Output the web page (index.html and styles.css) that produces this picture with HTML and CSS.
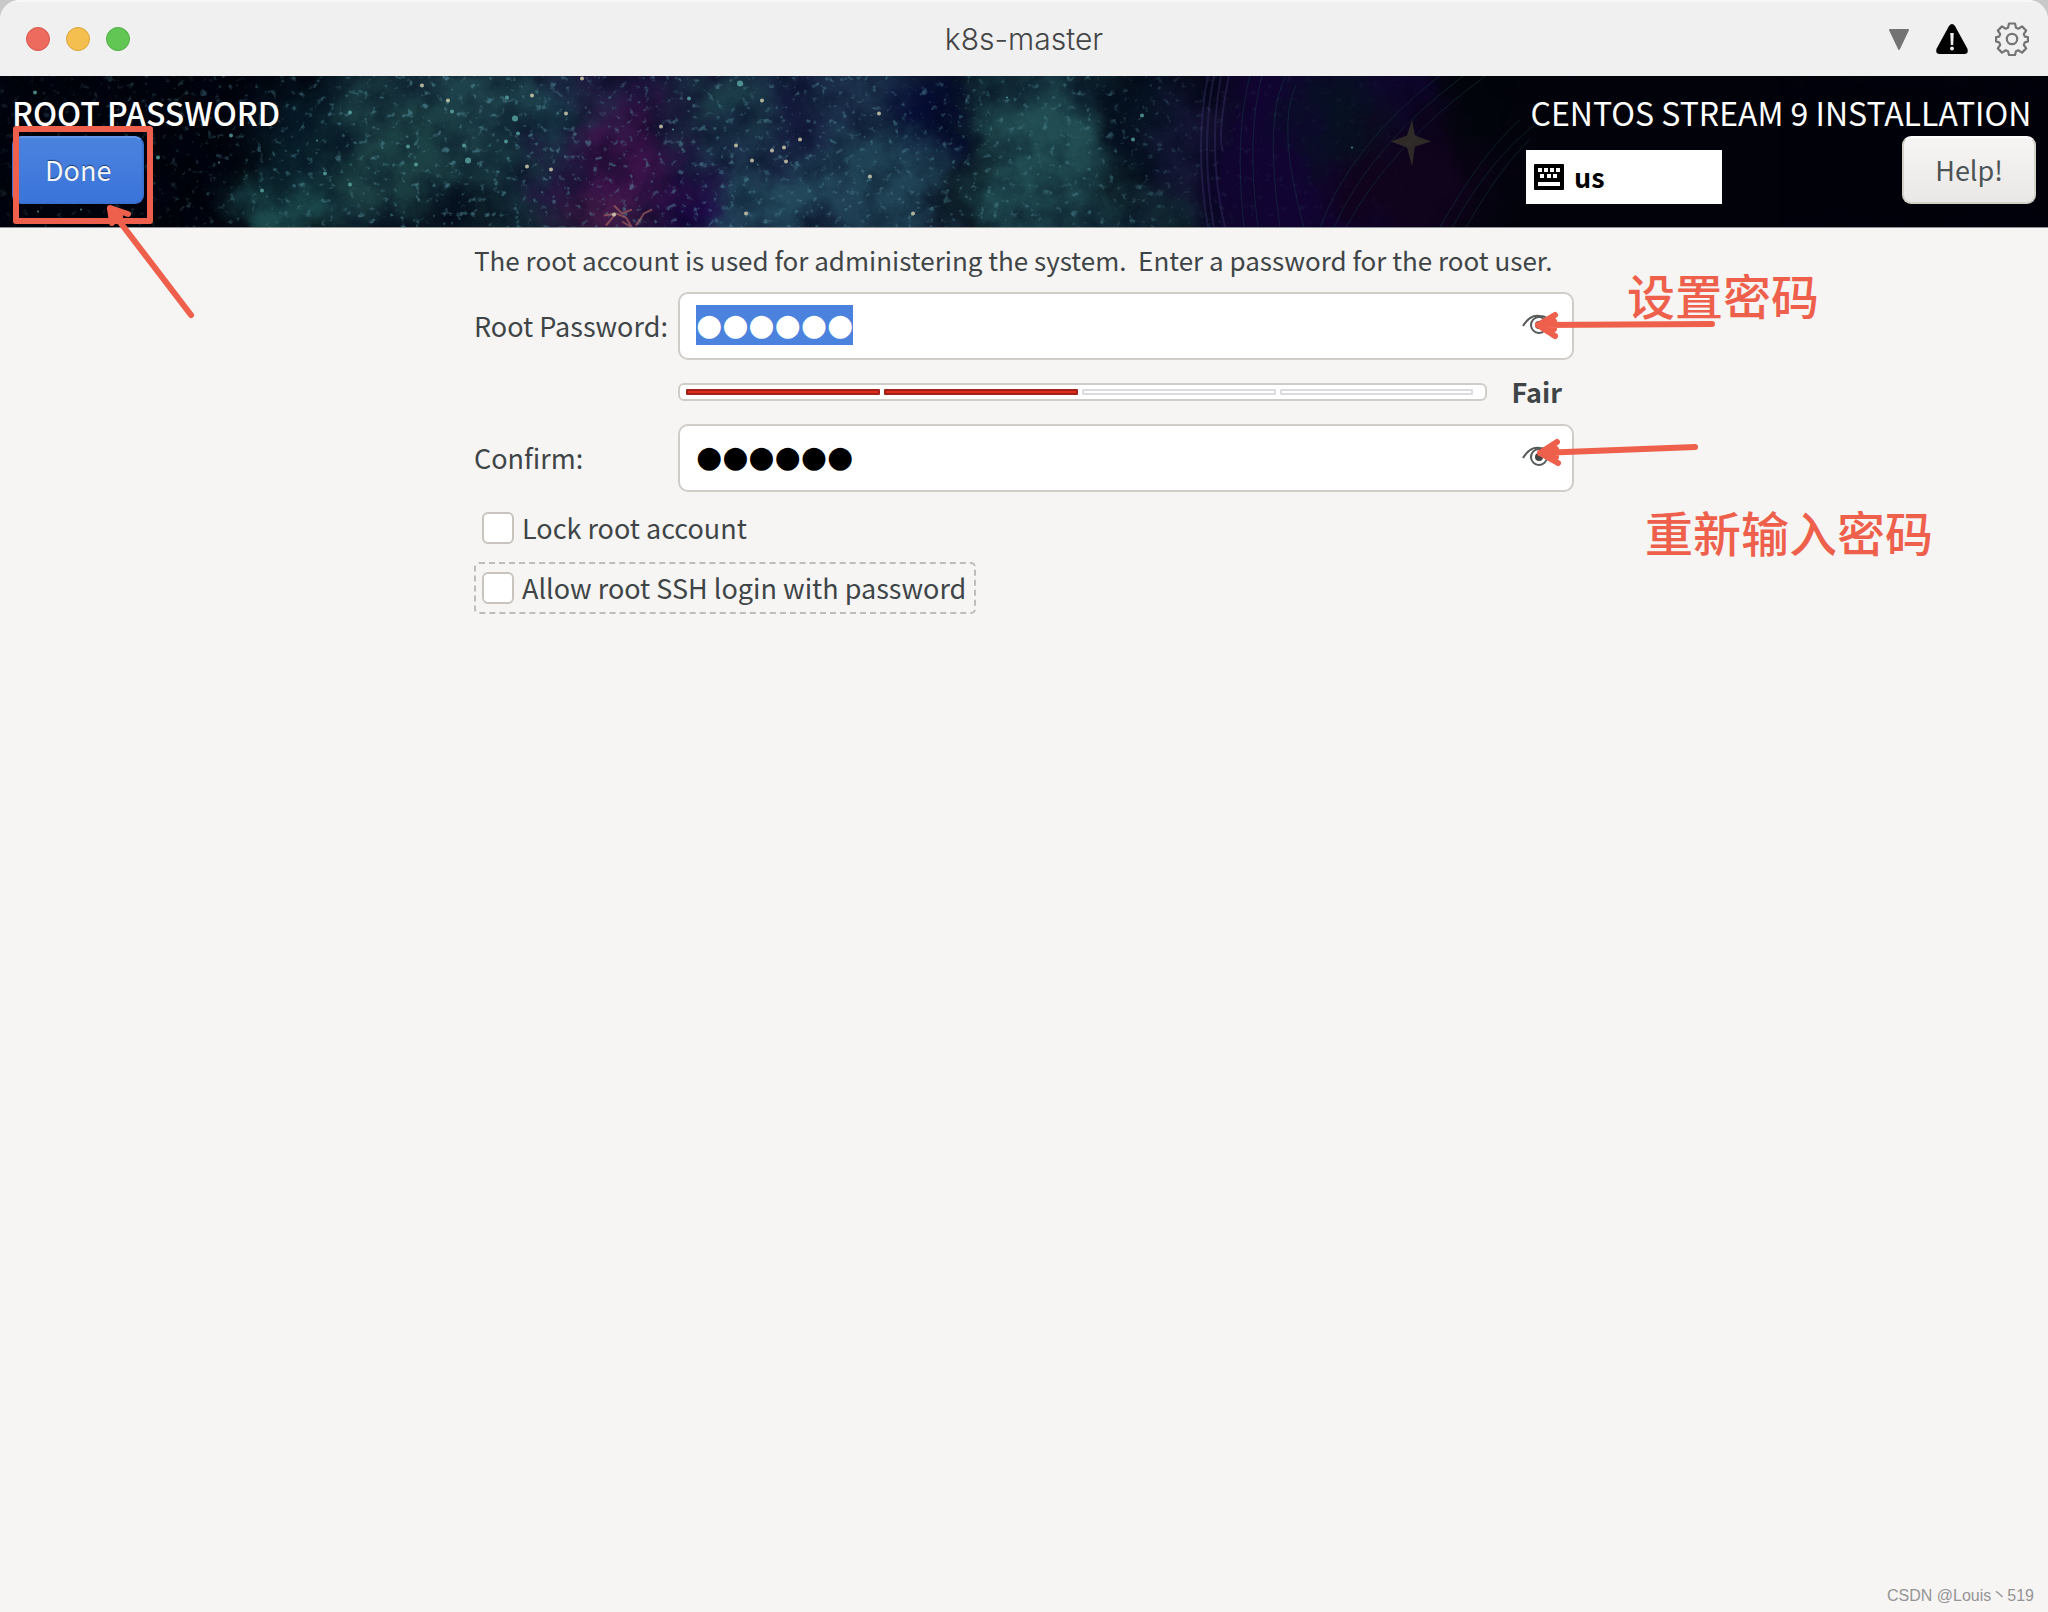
FILE: index.html
```html
<!DOCTYPE html>
<html lang="en">
<head>
    <meta charset="UTF-8" />
    <meta name="viewport" content="width=device-width, initial-scale=1" />
    <title>k8s-master</title>
    <link rel="stylesheet" href="styles.css">
</head>
<body>

<div class="window">
    <div class="titlebar">
        <div class="lights">
            <span class="light red"></span>
            <span class="light yellow"></span>
            <span class="light green"></span>
        </div>
        <div class="window-title">k8s-master</div>
        <div class="tools">
            <svg width="20" height="21" viewBox="0 0 20 21"><path d="M1 0h18q1.500 0 .8 1.400L11 20q-1 2-2 0L.2 1.400Q-.5 0 1 0z" fill="#737373"/></svg>
            <svg width="32" height="30" viewBox="0 0 32 30">
                <path d="M13 2q3-4 6 0l12.300 22.500q1.800 5-3 5.500H3.700q-4.800-.5-3-5.500z" fill="#000"/>
                <path d="M14.300 9h3.400l-.5 12h-2.400z" fill="#f0f0f0"/>
                <circle cx="16" cy="24.500" r="1.900" fill="#f0f0f0"/>
            </svg>
            <svg width="34" height="34" viewBox="0 0 34 34" fill="none" stroke="#757575" stroke-width="2.200" stroke-linejoin="round">
                <path d="M14 1.500h6l1 4.200 2.300 1 3.700-2.300 4.200 4.200-2.400 3.600 1 2.400 3.100.4v4.500l-3.100.9-1 2.400 2.400 3.600-4.200 4.200-3.700-2.300-2.300 1-1 3.700h-6l-1-3.700-2.300-1-3.700 2.300-4.200-4.200 2.400-3.600-1-2.400-3.100-.9V15l3.100-.4 1-2.400-2.400-3.600L7 4.400l3.700 2.300 2.300-1z"/>
                <circle cx="17" cy="17" r="5.200"/>
            </svg>
        </div>
    </div>

    <header class="banner">
        <svg class="nebula" viewBox="0 0 2048 152" preserveAspectRatio="xMidYMid slice" aria-hidden="true">
            <defs>
                <filter id="cloud" x="0" y="0" width="100%" height="100%" color-interpolation-filters="sRGB">
                    <feGaussianBlur stdDeviation="17" result="soft"/>
                    <feTurbulence type="fractalNoise" baseFrequency=".02" numOctaves="6" seed="7" result="n"/>
                    <feDisplacementMap in="soft" in2="n" scale="70" xChannelSelector="R" yChannelSelector="G"/>
                </filter>
                <filter id="shade" x="0" y="0" width="100%" height="100%" color-interpolation-filters="sRGB">
                    <feTurbulence type="fractalNoise" baseFrequency=".03" numOctaves="6" seed="21"/>
                    <feColorMatrix values="0 0 0 0 0  0 0 0 0 .02  0 0 0 0 .1  1.800 0 0 0 -.650"/>
                </filter>
                <filter id="dust" x="0" y="0" width="100%" height="100%" color-interpolation-filters="sRGB">
                    <feTurbulence type="fractalNoise" baseFrequency=".14" numOctaves="3" seed="4"/>
                    <feColorMatrix values="0 0 0 0 .36  0 0 0 0 .6  0 0 0 0 .66  0 5 0 0 -3.100"/>
                </filter>
                <linearGradient id="dustFade">
                    <stop offset="0" stop-color="#fff" stop-opacity=".15"/>
                    <stop offset=".2" stop-color="#fff" stop-opacity=".55"/>
                    <stop offset=".54" stop-color="#fff" stop-opacity=".4"/>
                    <stop offset=".6" stop-color="#fff" stop-opacity=".1"/>
                    <stop offset=".72" stop-color="#fff" stop-opacity="0"/>
                </linearGradient>
                <mask id="dustMask"><rect width="2048" height="152" fill="url(#dustFade)"/></mask>
            </defs>
            <rect width="2048" height="152" fill="#02040c"/>
            <g filter="url(#cloud)" opacity=".84">
                <rect width="2048" height="152" fill="#01040b"/>
                <ellipse cx="290" cy="130" rx="50" ry="36" fill="#246060"/>
                <ellipse cx="300" cy="60" rx="45" ry="50" fill="#0a2530"/>
                <rect x="340" y="-20" width="250" height="190" fill="#1b3e48"/>
                <ellipse cx="400" cy="80" rx="60" ry="60" fill="#224e50"/>
                <ellipse cx="480" cy="20" rx="60" ry="30" fill="#25505a"/>
                <ellipse cx="440" cy="148" rx="70" ry="20" fill="#050f1c"/>
                <rect x="545" y="-20" width="180" height="200" fill="#221a48"/>
                <ellipse cx="565" cy="40" rx="36" ry="34" fill="#20495a"/>
                <ellipse cx="624" cy="85" rx="44" ry="62" fill="#461555"/>
                <ellipse cx="600" cy="145" rx="50" ry="18" fill="#5b2456"/>
                <ellipse cx="690" cy="138" rx="32" ry="26" fill="#26055a"/>
                <rect x="715" y="-20" width="235" height="200" fill="#223c5a"/>
                <ellipse cx="775" cy="125" rx="60" ry="34" fill="#2a566c"/>
                <ellipse cx="720" cy="30" rx="44" ry="30" fill="#204a54"/>
                <ellipse cx="800" cy="40" rx="34" ry="46" fill="#1a2048"/>
                <ellipse cx="890" cy="110" rx="55" ry="60" fill="#265064"/>
                <ellipse cx="930" cy="34" rx="36" ry="34" fill="#060d3c"/>
                <rect x="975" y="-20" width="130" height="200" fill="#1d454f"/>
                <ellipse cx="1040" cy="90" rx="70" ry="65" fill="#295e62"/>
                <rect x="1115" y="-20" width="70" height="130" fill="#081626"/>
                <ellipse cx="1130" cy="150" rx="80" ry="20" fill="#1c424c"/>
                <ellipse cx="1185" cy="75" rx="20" ry="70" fill="#20204a"/>
                <rect x="1215" y="-20" width="210" height="200" fill="#14053a"/>
                <ellipse cx="1345" cy="40" rx="50" ry="46" fill="#081426"/>
                <ellipse cx="1410" cy="110" rx="80" ry="60" fill="#130320"/>
                <rect x="1510" y="-20" width="600" height="200" fill="#02020b"/>
            </g>
            <rect width="1220" height="152" filter="url(#shade)" opacity=".5"/>
            <g mask="url(#dustMask)"><rect width="2048" height="152" filter="url(#dust)"/></g>
            <g fill="none" stroke="#443a72" stroke-width="2" opacity=".35">
                <path d="M1208 0q-14 70 0 152M1214 0q-14 70 0 152M1221 0q-14 76 4 152M1229 0q-12 60-6 76"/>
            </g>
            <g fill="none" stroke="#174044" stroke-width="1" opacity=".45">
                <path d="M1250 0q-16 60-6 152M1262 0q-16 60-4 152M1286 0q-22 40-6 152M1296 10q-20 40 8 142"/>
                <path d="M1320 152Q1350 70 1440 0M1334 152Q1370 70 1464 0M1346 152Q1390 70 1486 0M1440 152Q1480 80 1520 44M1452 152Q1490 84 1534 50M1466 152Q1500 92 1530 64"/>
            </g>
            <path d="M1412 44l3 16 16 6-16 5-3 20-5-19-16-6 16-6z" fill="#45452f" opacity=".6"/>
            <g fill="none" stroke="#b06a68" stroke-width="2" opacity=".6">
                <path d="M606 150l10-12 10 4 6 10M614 130l8 8 10-4M636 150l8-12 8-4M622 146l10 6M604 140l12-2"/>
            </g>
            <g fill="#d9d3b2" opacity=".8">
                <circle cx="422" cy="10" r="2"/><circle cx="448" cy="25" r="2"/><circle cx="532" cy="20" r="2"/>
                <circle cx="582" cy="3" r="2"/><circle cx="566" cy="38" r="2"/><circle cx="527" cy="91" r="2"/>
                <circle cx="551" cy="94" r="2"/><circle cx="661" cy="51" r="2"/><circle cx="762" cy="25" r="2"/>
                <circle cx="736" cy="70" r="2"/><circle cx="784" cy="72" r="2"/><circle cx="772" cy="75" r="2"/>
                <circle cx="752" cy="85" r="2"/><circle cx="786" cy="86" r="2"/><circle cx="879" cy="38" r="2"/>
                <circle cx="870" cy="101" r="2"/><circle cx="913" cy="138" r="2"/><circle cx="746" cy="138" r="2"/>
                <circle cx="614" cy="139" r="2"/><circle cx="800" cy="64" r="2"/>
            </g>
            <g fill="#66b8b4" opacity=".7">
                <circle cx="35" cy="17" r="2"/><circle cx="231" cy="60" r="2"/><circle cx="158" cy="82" r="2"/>
                <circle cx="219" cy="87" r="1"/><circle cx="262" cy="115" r="2"/><circle cx="317" cy="65" r="1"/>
                <circle cx="325" cy="98" r="2"/><circle cx="38" cy="136" r="1"/><circle cx="81" cy="134" r="1"/>
                <circle cx="350" cy="37" r="2"/><circle cx="350" cy="109" r="2"/><circle cx="408" cy="71" r="2"/>
                <circle cx="464" cy="70" r="2"/><circle cx="468" cy="85" r="3"/><circle cx="506" cy="66" r="2"/>
                <circle cx="507" cy="22" r="2"/><circle cx="515" cy="43" r="3"/><circle cx="518" cy="58" r="2"/>
                <circle cx="452" cy="36" r="2"/><circle cx="416" cy="89" r="2"/><circle cx="689" cy="23" r="2"/>
                <circle cx="673" cy="54" r="1"/><circle cx="740" cy="8" r="3"/><circle cx="1142" cy="40" r="2"/>
                <circle cx="1133" cy="64" r="2"/><circle cx="1007" cy="22" r="1"/><circle cx="1352" cy="72" r="1"/>
            </g>
        </svg>

        <div class="banner-side">
            <h1>ROOT PASSWORD</h1>
            <button type="button" class="btn primary">Done</button>
        </div>
        <div class="banner-side product">
            <h2>CENTOS STREAM 9 INSTALLATION</h2>
            <div class="banner-row">
                <div class="keyboard">
                    <svg width="30" height="26" viewBox="0 0 30 26">
                        <rect width="30" height="26" rx="1" fill="#000"/>
                        <path d="M4 4h4v4H4zM10 4h4v4h-4zM16 4h4v4h-4zM22 4h4v4h-4zM6 10h4v4H6zM13 10h4v4h-4zM19 10h4v4h-4zM4 18h22v4H4z" fill="#fff"/>
                    </svg>
                    <span>us</span>
                </div>
                <button type="button" class="btn">Help!</button>
            </div>
        </div>

        <div class="mark-box"></div>
        <svg class="mark mark-done" width="100" height="126" viewBox="0 0 100 126">
            <path d="M10 10l81 106M10 9l18 6M10 9l2 15M12 12l8 6"/>
        </svg>
    </header>

    <main>
        <form class="password-form">
            <p class="intro">The root account is used for administering the system.&nbsp; Enter a password for the root user.</p>

            <label for="password">Root Password:</label>
            <div class="entry">
                <input type="text" id="password" value="●●●●●●" autocomplete="off" spellcheck="false" />
                <svg width="32" height="22" viewBox="0 0 32 22" fill="none" stroke="#555957">
                    <path d="M1 12Q8 0 18 2q8 0 13 9" stroke-width="2"/>
                    <circle cx="17" cy="11" r="8" stroke-width="2"/>
                    <circle cx="17" cy="11" r="4" fill="#444" stroke="none"/>
                </svg>
            </div>

            <div class="strength">
                <div class="levelbar" role="meter" aria-label="Password strength" aria-valuemin="0" aria-valuemax="4" aria-valuenow="2">
                    <span class="level on"></span>
                    <span class="level on"></span>
                    <span class="level"></span>
                    <span class="level"></span>
                </div>
                <strong>Fair</strong>
            </div>

            <label for="confirm">Confirm:</label>
            <div class="entry">
                <input type="text" id="confirm" value="●●●●●●" autocomplete="off" spellcheck="false" />
                <svg width="32" height="22" viewBox="0 0 32 22" fill="none" stroke="#555957">
                    <path d="M1 12Q8 0 18 2q8 0 13 9" stroke-width="2"/>
                    <circle cx="17" cy="11" r="8" stroke-width="2"/>
                    <circle cx="17" cy="11" r="4" fill="#444" stroke="none"/>
                </svg>
            </div>

            <div class="checks">
                <label class="check"><input type="checkbox" name="lock" /> <span>Lock root account</span></label>
                <label class="check focused"><input type="checkbox" name="ssh" /> <span>Allow root SSH login with password</span></label>
            </div>

            <!-- red notes drawn over the form -->
            <svg class="mark mark-set" width="200" height="40" viewBox="0 0 200 40">
                <path d="M8 20l174-1M8 20l17-10M8 20l17 11M14 20l10-4v8z"/>
            </svg>
            <svg class="mark mark-again" width="200" height="40" viewBox="0 0 200 40">
                <path d="M8 20l155-6M8 20l17-11M8 20l18 10M14 20l10-4v8z"/>
            </svg>
            <div class="note note-set" lang="zh">设置密码</div>
            <div class="note note-again" lang="zh">重新输入密码</div>
        </form>
    </main>

    <footer>CSDN @Louis丶519</footer>
</div>

<script>
    // start with the current password selected
    const password = document.getElementById('password');
    password.focus();
    password.select();
</script>

</body>
</html>
```
FILE: styles.css
```css
* {
    box-sizing: border-box;
}

body {
    margin: 0;
    background: #c9c9c9;
    font-family: "Noto Sans CJK SC", "Noto Sans", sans-serif;
    font-size: 27px;
    line-height: 40px;
    color: #3f4547;
}

.window {
    display: flex;
    flex-direction: column;
    min-height: 100vh;
    background: #f6f5f4;
    border-radius: 20px 20px 0 0;
    overflow: hidden;
}

.titlebar {
    display: grid;
    grid-template-columns: 1fr auto 1fr;
    align-items: center;
    height: 76px;
    padding: 0 19px;
    background: #f0f0f0;
    border-top: 2px solid #f8f8f8;
}

.lights {
    display: flex;
    gap: 16px;
    padding-left: 7px;
}

.light {
    width: 24px;
    height: 24px;
    border-radius: 50%;
    border: 1px solid;
}

.light.red { background: #ed6a5e; border-color: #d8564b; }
.light.yellow { background: #f5bf4f; border-color: #dba43b; }
.light.green { background: #62c655; border-color: #4fae41; }

.window-title {
    font-family: Inter, "Liberation Sans", sans-serif;
    font-size: 30px;
    font-weight: 300;
    color: #454545;
}

.tools {
    display: flex;
    justify-content: flex-end;
    align-items: center;
    gap: 27px;
}

.banner {
    position: relative;
    display: flex;
    justify-content: space-between;
    height: 152px;
    padding: 16px 12px 0;
    background: #02040c;
    border-bottom: 1px solid #8d9296;
}

.nebula {
    position: absolute;
    top: 0;
    left: 0;
    width: 100%;
    height: 100%;
}

.banner-side {
    position: relative;
    display: flex;
    flex-direction: column;
    align-items: flex-start;
    gap: 4px;
}

.product {
    min-width: 510px;
    align-items: center;
}

.banner h1,
.banner h2 {
    margin: 0;
    font-size: 32px;
    line-height: 40px;
    color: #fff;
}

.banner h1 { font-weight: 500; }
.banner h2 { font-weight: 400; }

.banner-row {
    display: flex;
    justify-content: space-between;
    align-items: flex-end;
    width: 100%;
}

.keyboard {
    display: flex;
    align-items: center;
    gap: 10px;
    width: 196px;
    height: 54px;
    padding: 0 8px;
    background: #fff;
    color: #000;
    font-weight: 700;
}

.btn {
    height: 68px;
    padding: 0 31px;
    font: inherit;
    color: #4c5355;
    background: linear-gradient(#f6f5f4, #e9e8e6);
    border: 2px solid #d4d0ca;
    border-top-color: #fff;
    border-radius: 9px;
}

.btn.primary {
    color: #f2f6fd;
    background: linear-gradient(#4a83de, #3b74da);
    border-color: #3a70d0;
    border-top-color: #6296e6;
    text-shadow: 0 -1px 1px rgba(0, 0, 0, 0.5);
}

main {
    flex: 1;
}

.password-form {
    position: relative;
    display: grid;
    grid-template-columns: 192px 1fr;
    column-gap: 12px;
    align-items: center;
    max-width: 1100px;
    margin: 0 auto;
    padding-top: 12px;
}

.password-form > label {
    white-space: nowrap;
}

.intro {
    grid-column: 1 / -1;
    margin: 0 0 12px;
    font-size: 26px;
    white-space: nowrap;
}

.entry {
    display: flex;
    align-items: center;
    height: 68px;
    padding: 0 18px 2px 16px;
    background: #fff;
    border: 2px solid #d0ccc7;
    border-radius: 10px;
}

.entry input {
    flex: 1;
    min-width: 0;
    height: 40px;
    padding: 0;
    border: none;
    outline: none;
    background: none;
    font-family: "DejaVu Sans", sans-serif;
    font-size: 30px;
    line-height: 40px;
    color: #000;
}

.entry input::selection {
    background: #4a82dd;
    color: #fff;
}

.strength {
    grid-column: 2;
    display: flex;
    align-items: center;
    justify-content: space-between;
    gap: 24px;
    height: 64px;
    padding-right: 12px;
}

.levelbar {
    flex: 1;
    display: flex;
    gap: 4px;
    height: 18px;
    padding: 4px 12px 4px 6px;
    background: #fff;
    border: 2px solid #d0ccc7;
    border-radius: 6px;
}

.level {
    flex: 1;
    border: 2px solid #dcdcde;
    border-radius: 1px;
}

.level.on {
    background: #dc2c20;
    border-color: #a32218;
}

.strength strong {
    font-weight: 700;
}

.checks {
    grid-column: 1 / -1;
    display: flex;
    flex-direction: column;
    align-items: flex-start;
    gap: 8px;
    margin-top: 10px;
}

.check {
    display: flex;
    align-items: center;
    gap: 8px;
    height: 52px;
    padding: 0 8px 0 6px;
    border: 2px solid transparent;
    border-radius: 5px;
}

.check.focused {
    border: 2px dashed #bdbdbb;
}

.check input {
    appearance: none;
    width: 32px;
    height: 32px;
    margin: 0;
    background: #fff;
    border: 2px solid #cac4be;
    border-radius: 6px;
}

.mark {
    position: absolute;
    fill: none;
    stroke: #ee5f4c;
    stroke-width: 6;
    stroke-linecap: round;
    stroke-linejoin: round;
}

.mark-box {
    position: absolute;
    top: 50px;
    left: 13px;
    width: 140px;
    height: 98px;
    border: 6px solid #ee5f4c;
    border-radius: 3px;
}

.mark-done { top: 123px; left: 100px; z-index: 1; }
.mark-set { top: 77px; left: 1056px; }
.mark-again { top: 205px; left: 1058px; }

.note {
    position: absolute;
    font-size: 48px;
    font-weight: 500;
    line-height: 56px;
    white-space: nowrap;
    color: #ee5f4c;
}

.note-set { top: 38px; left: 1153px; }
.note-again { top: 275px; left: 1171px; }

footer {
    padding: 0 14px 4px;
    font-family: "Liberation Sans", "Noto Sans CJK SC", sans-serif;
    font-size: 16px;
    line-height: 24px;
    text-align: right;
    color: #949494;
}
```
